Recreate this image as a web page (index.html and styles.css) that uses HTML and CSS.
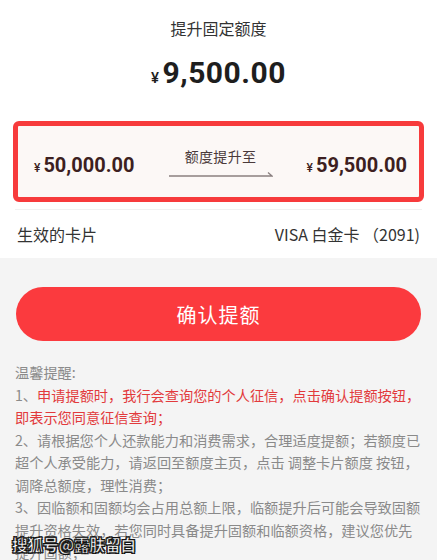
FILE: index.html
```html
<!DOCTYPE html>
<html lang="zh">
<head>
<meta charset="utf-8">
<link rel="stylesheet" href="styles.css">
</head>
<body>
<div class="page">
  <section class="top">
    <div class="title">提升固定额度</div>
    <div class="amount"><span class="yen">¥</span>9,500.00</div>
    <div class="box">
      <div class="val"><span class="yen-s">¥</span>50,000.00</div>
      <div class="mid">
        <span class="mid-label">额度提升至</span>
        <svg class="arrow" width="104" height="6" viewBox="0 0 104 6"><path d="M0 5H103L99 1.5" fill="none" stroke="#8a8080" stroke-width="1.3"/></svg>
      </div>
      <div class="val"><span class="yen-s">¥</span>59,500.00</div>
    </div>
    <div class="card-row">
      <span>生效的卡片</span>
      <span>VISA 白金卡 （2091)</span>
    </div>
  </section>
  <section class="bottom">
    <div class="btn">确认提额</div>
    <div class="tips">
      <p>温馨提醒:</p>
      <p>1、<span class="red">申请提额时，我行会查询您的个人征信，点击确认提额按钮，<br>即表示您同意征信查询；</span></p>
      <p>2、请根据您个人还款能力和消费需求，合理适度提额；若额度已<br>超个人承受能力，请返回至额度主页，点击 调整卡片额度 按钮，<br>调降总额度，理性消费；</p>
      <p>3、因临额和固额均会占用总额上限，临额提升后可能会导致固额<br>提升资格失效，若您同时具备提升固额和临额资格，建议您优先<br>提升固额；</p>
    </div>
  </section>
  <div class="watermark">搜狐号@露肤留白</div>
</div>
</body>
</html>
```
FILE: styles.css
```css
* { box-sizing: border-box; }
html, body { margin: 0; padding: 0; }
body {
  width: 437px;
  height: 560px;
  overflow: hidden;
  font-family: "Noto Sans CJK SC", "Noto Sans", sans-serif;
  background: #f4f4f4;
}
.page { position: relative; width: 437px; height: 560px; overflow: hidden; }
.top {
  background: #fff;
  display: flex;
  flex-direction: column;
  align-items: center;
  padding-top: 15px;
}
.title {
  font-size: 16px;
  line-height: 26px;
  color: #333;
}
.amount {
  margin-top: 14px;
  font-family: Roboto, "Liberation Sans", sans-serif;
  font-weight: 700;
  font-size: 30px;
  line-height: 36px;
  color: #1e1e1e;
  letter-spacing: 0.5px;
}
.amount .yen { font-size: 15px; font-weight: 500; margin-right: 3px; }
.box {
  margin-top: 25px;
  width: 411px;
  height: 81px;
  border: 5px solid #f73b3c;
  border-radius: 6px;
  background: #fcf8f6;
  display: flex;
  align-items: center;
  justify-content: space-between;
  padding: 0 12px 0 16px;
}
.val {
  font-family: Roboto, "Liberation Sans", sans-serif;
  font-weight: 700;
  font-size: 20px;
  color: #3d1f21;
  padding-top: 6px;
}
.yen-s { font-size: 12px; font-weight: 500; margin-right: 3px; }
.mid {
  display: flex;
  flex-direction: column;
  align-items: center;
  padding-top: 0;
}
.mid-label { font-size: 14px; color: #4a3a3a; line-height: 20px; letter-spacing: 0.3px; }
.arrow { display: block; margin-top: 5px; }
.card-row {
  margin-top: 7px;
  width: 407px;
  border-top: 1px solid #f1f1f1;
  height: 49px;
  display: flex;
  align-items: center;
  justify-content: space-between;
  font-size: 16px;
  color: #333;
  padding: 0 2px 0 2px;
}
.bottom { padding: 29px 15px 0; }
.btn {
  margin: 0 1px;
  height: 54px;
  border-radius: 27px;
  background: #fb3a3e;
  color: #fff;
  font-size: 20px;
  display: flex;
  align-items: center;
  justify-content: center;
  letter-spacing: 1px;
}
.tips {
  margin-top: 20px;
  font-size: 14.2px;
  line-height: 22.5px;
  color: #8a8a8a;
  white-space: nowrap;
}
.tips p { margin: 0; }
.red { color: #e23a3c; }
.watermark {
  position: absolute;
  left: 12px;
  top: 532px;
  font-size: 15.5px;
  font-weight: 700;
  color: #fff;
  line-height: 24px;
  -webkit-text-stroke: 0.6px #111;
  text-shadow: 1px 1px 0 #111, -1px -1px 0 #111, 1px -1px 0 #111, -1px 1px 0 #111;
}
```
